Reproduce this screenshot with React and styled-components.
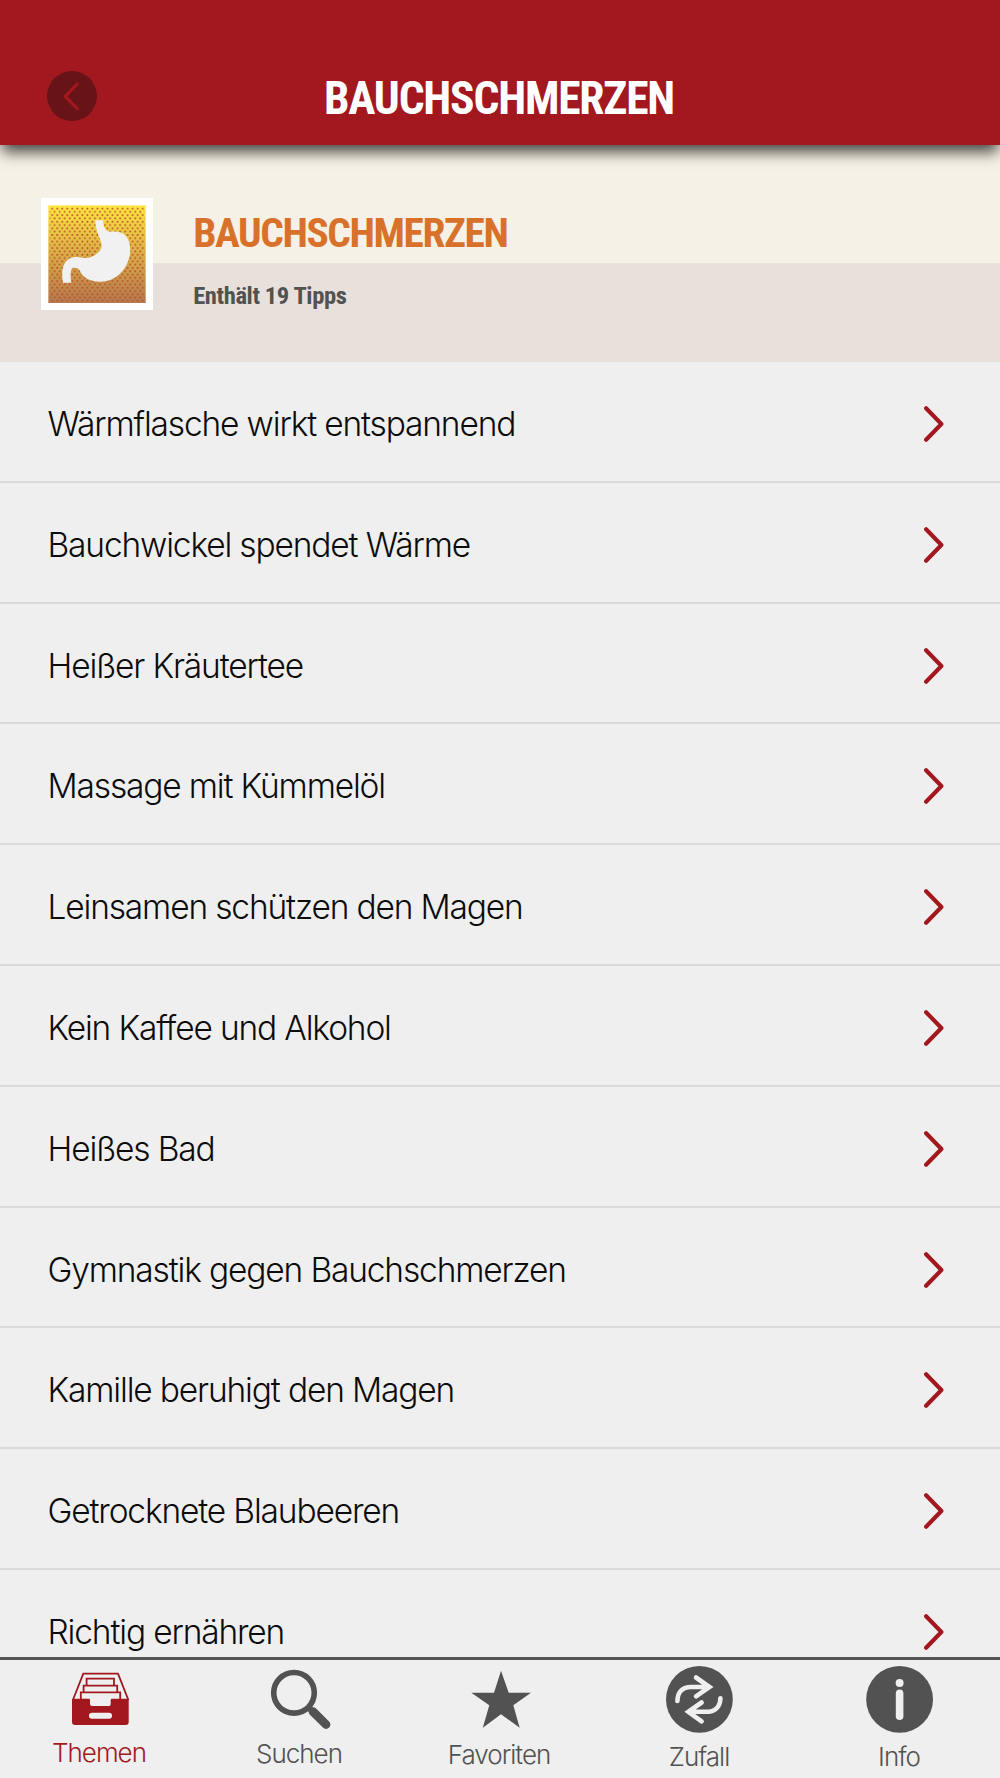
import React from 'react'
import styled, { createGlobalStyle } from 'styled-components'

const GlobalStyle = createGlobalStyle`
body {
margin: 0;
background-color: #efefef;
}
* {
box-sizing: border-box;
}
`

const Container = styled.div`
width: 1000px;
height: 1778px;
display: flex;
flex-direction: column;
overflow: hidden;
background-color: #efefef;
font-family: Inter, "Liberation Sans", sans-serif;
`

const Header = styled.header`
position: relative;
z-index: 1;
flex: none;
height: 145px;
padding: 49px 47px 0px;
display: grid;
grid-template-columns: 50px 1fr 50px;
align-items: start;
background-color: #a3181f;
box-shadow: 0px 9px 14px -2px rgba(0, 0, 0, 0.72);
`
const BackButton = styled.button`
width: 50px;
height: 50px;
margin-top: 22px;
padding: 0;
border: none;
border-radius: 50%;
background-color: #671317;
`
const HeaderTitle = styled.h1`
margin: 25px 2px 0px 0px;
text-align: center;
color: white;
font: 700 45.5px/50px "Roboto Condensed", Roboto, sans-serif;
letter-spacing: -1.2px;
`

const Hero = styled.section`
flex: none;
height: 217px;
padding: 52.5px 40.6px 0px;
display: flex;
align-items: flex-start;
background: linear-gradient(#f6f1e6 0px, #f6f1e6 118px, #e8e0db 118px);
`
const HeroText = styled.div`
margin: 15px 0px 0px 40.6px;
`
const HeroTitle = styled.h2`
margin: 0;
color: #d8722b;
font: 700 41.4px/40px "Roboto Condensed", Roboto, sans-serif;
letter-spacing: -1.4px;
`
const HeroInfo = styled.p`
margin: 28px 0px 0px;
color: #525252;
font: 700 24.6px/30px "Roboto Condensed", Roboto, sans-serif;
letter-spacing: -0.4px;
`

const List = styled.ul`
flex: 1;
min-height: 0;
margin: 0;
padding: 0;
list-style: none;
overflow: hidden;
`
const ListItem = styled.li`
height: 120.8px;
padding: 5.4px 56.4px 0px 47.5px;
display: flex;
align-items: center;
justify-content: space-between;
border-bottom: 2px solid #d9d9d9;
color: #0c0c0c;
font-size: 33.5px;
font-weight: 300;
letter-spacing: -1.16px;
white-space: nowrap;
`

const TabBar = styled.nav`
flex: none;
height: 121px;
padding-top: 3px;
display: grid;
grid-template-columns: repeat(5, 1fr);
border-top: 3px solid #555;
background-color: #efefef;
`
const Tab = styled.a`
display: flex;
flex-direction: column;
align-items: center;
color: ${props => props.$active ? "#a3181f" : "#525252"};
`
const TabLabel = styled.span`
margin-top: ${props => props.$gap}px;
padding-right: 2px;
font-size: 26px;
font-weight: 300;
line-height: 30px;
letter-spacing: -1px;
`

const BackIcon = () => (
    <svg width="50" height="50" viewBox="0 0 50 50" fill="none" stroke="#a3181f" strokeWidth="3.2" strokeLinecap="round" strokeLinejoin="round">
        <path d="M30.2 13 L18.2 25.3 L30.2 37.5" />
    </svg>
)

const Chevron = () => (
    <svg width="20" height="36" viewBox="0 0 20 36" fill="none" stroke="#a3181f" strokeWidth="4.1" strokeLinecap="round" strokeLinejoin="round">
        <path d="M2.1 2.2 L17.4 18 L2.1 33.8" />
    </svg>
)

const StomachIcon = () => (
    <svg width="112" height="112" viewBox="0 0 336 336">
        <defs>
            <linearGradient id="amber" x1="0" y1="0" x2="0" y2="1">
                <stop offset="0" stopColor="#ffe640" />
                <stop offset="1" stopColor="#b6774d" />
            </linearGradient>
            <pattern id="dots" x="30" y="29" width="15.1" height="19.8" patternUnits="userSpaceOnUse">
                <rect x="1" y="0" width="5" height="5" fill="#b64d2b" />
                <rect x="8.5" y="9.9" width="5" height="5" fill="#b64d2b" />
            </pattern>
        </defs>
        <rect width="336" height="336" fill="white" />
        <rect x="22" y="22" width="292" height="293" fill="url(#amber)" />
        <rect x="26" y="28" width="284" height="282" fill="url(#dots)" />
        <path fill="#f1f1f1" d="M163 67 H187 C187 88 193 100 208 101 C248 96 268 117 268 158 C265 212 224 251 180 251 C145 252 124 238 116 217 C111 209 97 206 92 213 C88 221 88 239 91 254 H66 C62 233 62 211 71 196 C80 180 99 174 116 178 C135 183 151 180 165 169 C181 157 185 146 180 131 C172 111 163 91 163 67 Z" />
    </svg>
)

const ThemesIcon = () => (
    <svg width="72" height="72" viewBox="0 0 72 72" fill="none" stroke="currentColor" strokeWidth="1.8">
        <path d="M8.9 37 L19.3 10.6 H54 L64.4 37" />
        <path d="M22.6 22 V15.6 H50 V22" />
        <path d="M19.6 29 V22.7 H53.2 V29" />
        <path d="M16.8 36 V29.3 H56.2 V36" />
        <path fill="currentColor" stroke="none" fillRule="evenodd" d="M9 35.7 H25 Q26 35.7 26 37 V41 Q26 43 28 43 H45 Q46.7 43 46.7 41 V37 Q46.7 35.7 48 35.7 H63.5 Q64.7 35.7 64.7 37 V59 Q64.7 62 61.7 62 H11 Q8 62 8 59 V37 Q8 35.7 9 35.7 Z M28 49.7 A3 3 0 0 0 28 55.8 H45 A3 3 0 0 0 45 49.7 Z" />
    </svg>
)

const SearchIcon = () => (
    <svg width="72" height="72" viewBox="0 0 72 72" fill="none" stroke="currentColor" strokeLinecap="round">
        <circle cx="30" cy="29.8" r="20.3" strokeWidth="5.6" />
        <path strokeWidth="6" d="M45.4 45.4 L48 48" />
        <path strokeWidth="8.8" d="M49 48.6 L62 61.5" />
    </svg>
)

const StarIcon = () => (
    <svg width="72" height="72" viewBox="0 0 72 72" fill="currentColor">
        <path d="M37 7.7 L44.7 29.7 H67 L49.3 42.3 L55.7 64.8 L37 51.3 L18.8 64.8 L25.3 42.3 L7.3 29.7 H30 Z" />
    </svg>
)

const ShuffleIcon = () => (
    <svg width="72" height="72" viewBox="0 0 72 72" fill="none" stroke="#efefef" strokeWidth="4.6" strokeLinecap="round">
        <circle cx="35.4" cy="36.4" r="33.4" fill="currentColor" stroke="none" />
        <path d="M13.4 38 C13.6 28.5 19 24 27 24 H41 M32 14.5 L45.5 24 L32 33.3" />
        <path d="M56.4 35.2 C56.2 44.5 50.5 48.8 42 48.8 H28 M37.6 39.5 L24.3 48.8 L37.6 58.3" />
    </svg>
)

const InfoIcon = () => (
    <svg width="72" height="72" viewBox="0 0 72 72" fill="currentColor">
        <circle cx="35.6" cy="36.4" r="33.4" />
        <circle cx="35.6" cy="20" r="4" fill="#efefef" />
        <rect x="31.8" y="26.6" width="7.6" height="30.4" rx="3.8" fill="#efefef" />
    </svg>
)

const tips = [
    "Wärmflasche wirkt entspannend",
    "Bauchwickel spendet Wärme",
    "Heißer Kräutertee",
    "Massage mit Kümmelöl",
    "Leinsamen schützen den Magen",
    "Kein Kaffee und Alkohol",
    "Heißes Bad",
    "Gymnastik gegen Bauchschmerzen",
    "Kamille beruhigt den Magen",
    "Getrocknete Blaubeeren",
    "Richtig ernähren",
]

const tabs = [
    { label: "Themen", icon: <ThemesIcon />, gap: 2.5, active: true },
    { label: "Suchen", icon: <SearchIcon />, gap: 4 },
    { label: "Favoriten", icon: <StarIcon />, gap: 5 },
    { label: "Zufall", icon: <ShuffleIcon />, gap: 7 },
    { label: "Info", icon: <InfoIcon />, gap: 7 },
]

const App = () => {
    return (
        <Container>
            <GlobalStyle />
            <Header>
                <BackButton aria-label="Zurück"><BackIcon /></BackButton>
                <HeaderTitle>BAUCHSCHMERZEN</HeaderTitle>
            </Header>
            <Hero>
                <StomachIcon />
                <HeroText>
                    <HeroTitle>BAUCHSCHMERZEN</HeroTitle>
                    <HeroInfo>Enthält 19 Tipps</HeroInfo>
                </HeroText>
            </Hero>
            <List>
                {tips.map(tip => (
                    <ListItem key={tip}>
                        {tip}
                        <Chevron />
                    </ListItem>
                ))}
            </List>
            <TabBar>
                {tabs.map(tab => (
                    <Tab key={tab.label} $active={tab.active}>
                        {tab.icon}
                        <TabLabel $gap={tab.gap}>{tab.label}</TabLabel>
                    </Tab>
                ))}
            </TabBar>
        </Container>
    )
}

export default App
